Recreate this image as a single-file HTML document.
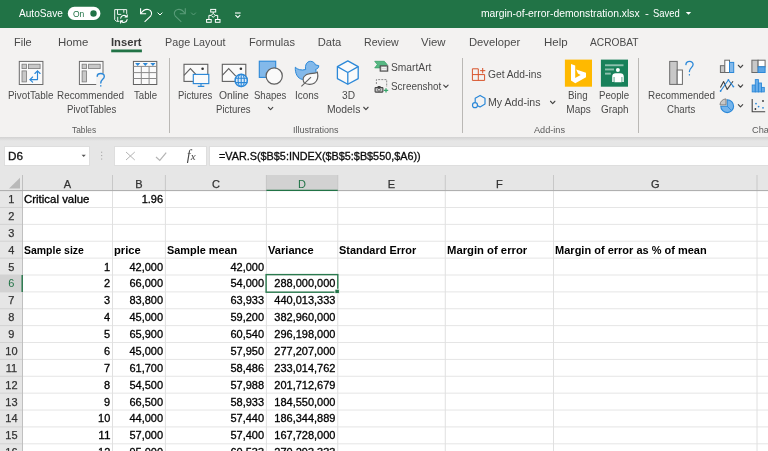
<!DOCTYPE html>
<html lang="en">
<head>
<meta charset="utf-8">
<title>margin-of-error-demonstration.xlsx - Excel</title>
<style>
html,body{margin:0;padding:0;}
body{width:768px;height:451px;overflow:hidden;background:#e6e6e6;font-family:"Liberation Sans",sans-serif;}
#app{will-change:transform;position:relative;width:768px;height:451px;overflow:hidden;background:#e6e6e6;}
.r{position:absolute;}
.t{position:absolute;white-space:nowrap;line-height:1;color:#444;transform-origin:0 50%;font-family:"Liberation Sans",sans-serif;}
.t.k{-webkit-text-stroke:.3px #000;}
.t.k2{-webkit-text-stroke:.25px #333;}
.t.fx{font-family:"Liberation Serif",serif;font-style:italic;}
.t.fx small{font-size:11px;}
svg{position:absolute;overflow:visible;}
svg.lines{left:0;top:0;}
.tabrow{position:absolute;left:0;top:28px;width:768px;height:27px;background:#f3f2f1;}
.ribbonbg{position:absolute;left:0;top:55px;width:768px;height:82px;background:#f3f2f1;}
.shadow{position:absolute;left:0;top:137px;width:768px;height:4px;background:linear-gradient(#d2d2d2,#e6e6e6);}
.sep{position:absolute;top:58px;width:1px;height:75px;background:#bab8b5;}
.box{position:absolute;background:#fff;top:147px;height:18px;box-shadow:0 0 0 1px #dedede;}
</style>
</head>
<body>
<div id="app">
<header class="title">
<svg class="lines" width="768" height="60" viewBox="0 0 768 60"><rect x="0" y="0" width="768" height="28.4" fill="#217346"/></svg>
<svg class="lines" width="768" height="60" viewBox="0 0 768 60"><rect x="67.8" y="6.8" width="32.6" height="13.2" rx="6.6" fill="#fff"/><circle cx="93.5" cy="13.5" r="3.2" fill="#217346"/></svg>
<svg class="lines ic-title" width="768" height="451" viewBox="0 0 768 451" fill="none">
<g stroke="#fff" stroke-width="1" stroke-linejoin="round" opacity=".92"><path d="M119.4 21.3H116.4L114.7 19.6V9.6H126.7V13.9"/><path d="M117.5 9.6V14.4H121.3"/><path d="M123.8 9.6V12.7"/><path d="M117.7 21.3V16.8"/></g>
<g stroke="#fff" stroke-width="1.1" stroke-linecap="round" stroke-linejoin="round"><path d="M120.7 18.2A3.3 3.3 0 0 1 126.6 16.7M127.2 14.9V17H125.1"/><path d="M127.1 19.6A3.3 3.3 0 0 1 121.2 21.1M120.6 22.9V20.8H122.7"/></g>
<g stroke="#fff" stroke-width="1.1" stroke-linecap="square" stroke-linejoin="miter"><path d="M140.6 8.8V13.7H145.6"/><path d="M141 13.4C142.8 10.6 145.6 9 148.2 9.5C151.6 10.3 152.6 13.8 150.6 16.2L144.6 21.8" stroke-linecap="butt"/><path d="M157.9 12.9L160 15L162.1 12.9" stroke-linecap="round" stroke-width="1"/></g>
<g stroke="#5a9c79" stroke-width="1.1" stroke-linecap="square"><path d="M185.3 8.8V13.7H180.3"/><path d="M184.9 13.4C183.1 10.6 180.3 9 177.7 9.5C174.3 10.3 173.3 13.8 175.3 16.2L181.3 21.8" stroke-linecap="butt"/><path d="M191.4 12.9L193.5 15L195.6 12.9" stroke-linecap="round" stroke-width="1"/></g>
<g stroke="#fff" stroke-width="1"><rect x="210.7" y="9.4" width="5" height="2.6"/><rect x="206.6" y="19.5" width="4.6" height="2.8"/><rect x="215.4" y="19.5" width="4.6" height="2.8"/><path d="M213.2 12V13.4M213.2 13.4L215.2 15.4L213.2 17.4L211.2 15.4ZM211.2 15.4H208.9V19.5M215.2 15.4H217.7V19.5"/></g>
<g stroke="#fff" stroke-width="1.1"><path d="M235 13H240.6"/><path d="M235.4 15.1L237.8 17.4L240.2 15.1"/></g>
<path d="M685.8 12H691.2L688.5 14.8Z" fill="#fff"/>
</svg>
<span class="t" style="top:9.00px;font-size:10.4px;color:#fff;left:19.33px;transform:scaleX(0.973);">AutoSave</span>
<span class="t" style="top:10.00px;font-size:8.6px;color:#217346;left:72.73px;transform:scaleX(0.989);">On</span>
<span class="t" style="top:9.00px;font-size:10.4px;color:#fff;left:481.33px;transform:scaleX(0.995);">margin-of-error-demonstration.xlsx</span>
<span class="t" style="top:9.00px;font-size:10.4px;color:#fff;left:644.63px;transform:scaleX(1.108);">-</span>
<span class="t" style="top:9.00px;font-size:10.4px;color:#fff;left:653.18px;transform:scaleX(0.906);">Saved</span>
</header>
<nav class="tabs">
<div class="tabrow"></div>
<svg class="lines" width="768" height="60" viewBox="0 0 768 60"><rect x="111.2" y="49.5" width="30.7" height="2.8" fill="#217346"/></svg>
<span class="t" style="top:37.00px;font-size:11.2px;color:#4a4a4a;left:13.98px;transform:scaleX(0.983);">File</span>
<span class="t" style="top:37.00px;font-size:11.2px;color:#4a4a4a;left:57.68px;transform:scaleX(1.020);">Home</span>
<span class="t" style="top:37.00px;font-size:11.2px;color:#4a4a4a;left:164.58px;transform:scaleX(0.962);">Page Layout</span>
<span class="t" style="top:37.00px;font-size:11.2px;color:#4a4a4a;left:248.88px;transform:scaleX(0.986);">Formulas</span>
<span class="t" style="top:37.00px;font-size:11.2px;color:#4a4a4a;left:317.63px;">Data</span>
<span class="t" style="top:37.00px;font-size:11.2px;color:#4a4a4a;left:363.88px;transform:scaleX(0.947);">Review</span>
<span class="t" style="top:37.00px;font-size:11.2px;color:#4a4a4a;left:421.38px;transform:scaleX(1.020);">View</span>
<span class="t" style="top:37.00px;font-size:11.2px;color:#4a4a4a;left:468.68px;transform:scaleX(1.005);">Developer</span>
<span class="t" style="top:37.00px;font-size:11.2px;color:#4a4a4a;left:543.68px;transform:scaleX(1.027);">Help</span>
<span class="t" style="top:37.00px;font-size:11.2px;color:#4a4a4a;left:590.38px;transform:scaleX(0.911);">ACROBAT</span>
<span class="t" style="top:37.00px;font-size:11px;color:#3a3a3a;font-weight:700;left:111.19px;transform:scaleX(1.018);">Insert</span>
</nav>
<section class="ribbon">
<div class="ribbonbg"></div>
<div class="sep" style="left:169px"></div>
<div class="sep" style="left:462px"></div>
<div class="sep" style="left:638px"></div>
<svg class="lines ic-ribbon" width="768" height="451" viewBox="0 0 768 451" fill="none">
<g stroke="#6a6a6a" stroke-width="1"><rect x="19.3" y="61.4" width="23.6" height="23.1" fill="#fafafa"/><g stroke="#7a7a7a" fill="#c8c8c8" stroke-width=".8"><rect x="22.0" y="64.2" width="4.4" height="4.4"/><rect x="28.5" y="64.2" width="11.6" height="4.4"/><rect x="22.0" y="70.9" width="4.4" height="11"/></g></g>
<g stroke="#2b88d8" stroke-width="1.15" stroke-linecap="round" stroke-linejoin="round"><path d="M30 79.6H37.5V71"/><path d="M32.6 77L30 79.6L32.6 82.2"/><path d="M34.9 73.5L37.5 70.8L40.1 73.5"/></g>
<g stroke="#6a6a6a" stroke-width="1"><rect x="79.4" y="61.4" width="23.6" height="23.1" fill="#fafafa"/><g stroke="#7a7a7a" fill="#c8c8c8" stroke-width=".8"><rect x="82.10000000000001" y="64.2" width="4.4" height="4.4"/><rect x="88.60000000000001" y="64.2" width="11.6" height="4.4"/><rect x="82.10000000000001" y="70.9" width="4.4" height="11"/></g></g>
<rect x="96.2" y="73.4" width="10" height="14" fill="#f3f2f1"/>
<g stroke="#2b88d8" stroke-width="1.4" stroke-linecap="round"><path d="M97.2 76.2C97.4 72.6 104.4 72.4 104.3 76.4C104.2 79.3 100.8 79.4 100.8 83"/><path d="M100.8 85.8V86"/></g>
<g stroke="#606060" stroke-width="1"><rect x="133.4" y="61.4" width="23.4" height="23.1" fill="#fafafa"/><path d="M133.4 66.4H156.8M133.4 72.6H156.8M133.4 78.5H156.8M141.3 66.4V84.5M149.1 66.4V84.5" stroke="#8a8a8a"/></g>
<path d="M135.1 63H140.3L137.7 66ZM142.7 63H147.9L145.3 66ZM150.3 63H155.5L152.9 66Z" fill="#2b88d8"/>
<g stroke="#606060" stroke-width="1.1"><rect x="184" y="64.3" width="23.8" height="17.1" fill="#fafafa"/><path d="M184 75.3L190.4 68.6L197.5 76.2" stroke-linejoin="miter"/></g><circle cx="202.6" cy="68.8" r="1.3" fill="#333"/>
<g stroke="#2b88d8" stroke-width="1.15"><rect x="193.3" y="74.4" width="15.5" height="9.2" fill="#fafafa"/><path d="M201 83.6V86.2M197.8 86.3H204.3"/></g>
<g stroke="#606060" stroke-width="1.1"><rect x="222.3" y="64.3" width="23.5" height="17.1" fill="#fafafa"/><path d="M222.3 75.3L228.70000000000002 68.6L235.8 76.2" stroke-linejoin="miter"/></g><circle cx="240.9" cy="68.8" r="1.3" fill="#333"/>
<circle cx="241.2" cy="80.4" r="6.1" fill="#dcebf9" stroke="#2b88d8" stroke-width="1.5"/><g stroke="#2b88d8" stroke-width="1.1"><path d="M235 78.2H247.4M235 82.6H247.4M241.2 74V86.8"/><ellipse cx="241.2" cy="80.4" rx="3.1" ry="6.2"/></g>
<rect x="259.3" y="61.2" width="16.4" height="16.2" fill="#83b9ea" stroke="#2b88d8" stroke-width="1.1"/><circle cx="274.2" cy="76" r="8.1" fill="#fafafa" stroke="#606060" stroke-width="1.2"/>
<path d="M295.3 67.2C297.2 69.6 301.6 70.7 305.7 69.5C304.7 65.4 306.8 61.3 310.4 61.3C313 61.3 314.8 62.8 315.3 64.8L318.8 65.7C318.7 67.8 317.4 69 315.6 69.4C316.6 71.6 316 74 314.6 75.6L308 79.4H302.4C297.6 78.6 295 73.6 295.3 67.2Z" fill="#83b9ea" stroke="#2b88d8" stroke-width="1"/>
<path d="M304.1 82.6C301.4 78 305 73.9 310 73.6C313 73.4 315.6 73.2 317.4 72.2C318.3 76 317.8 80.5 314.5 83C311.5 85 307 84.7 304.1 82.6Z" fill="#fafafa" stroke="#606060" stroke-width="1.1"/><path d="M301.4 86.4L311 77.2" stroke="#606060" stroke-width="1.1"/>
<g stroke="#2b88d8" stroke-width="1.3" stroke-linejoin="round"><path d="M347.8 60.9L358.2 66.6V78.6L347.8 84.3L337.4 78.6V66.6Z" fill="#fafafa"/><path d="M337.4 66.6L347.8 72.5L358.2 66.6M347.8 72.5V84.3"/></g>
<path d="M268.4 107.35L270.6 109.65L272.8 107.35" stroke="#444" stroke-width="1.1" stroke-linecap="round" stroke-linejoin="round"/>
<path d="M363.7 107.25L365.9 109.55L368.1 107.25" stroke="#444" stroke-width="1.1" stroke-linecap="round" stroke-linejoin="round"/>
<path d="M443.7 85.05L445.9 87.35L448.1 85.05" stroke="#444" stroke-width="1.1" stroke-linecap="round" stroke-linejoin="round"/>
<path d="M550.5 101.25L552.7 103.55L554.9 101.25" stroke="#444" stroke-width="1.1" stroke-linecap="round" stroke-linejoin="round"/>
<path d="M738.3 65.25L740.5 67.55L742.7 65.25" stroke="#444" stroke-width="1.1" stroke-linecap="round" stroke-linejoin="round"/>
<path d="M738.3 84.95L740.5 87.25L742.7 84.95" stroke="#444" stroke-width="1.1" stroke-linecap="round" stroke-linejoin="round"/>
<path d="M738.3 104.65L740.5 106.95L742.7 104.65" stroke="#444" stroke-width="1.1" stroke-linecap="round" stroke-linejoin="round"/>
<path d="M374.7 61.3H384.3L387.2 64.6L384.3 67.9H374.7L377.3 64.6Z" fill="#58b884" stroke="#2f9e62" stroke-width=".7"/><rect x="380.2" y="65.9" width="7.5" height="5.2" fill="#d4d4d4" stroke="#4a4a4a" stroke-width="1.1"/><path d="M382 67.6H386M382 69.4H386" stroke="#fff" stroke-width=".8"/>
<path d="M376.4 84V79.6H386.7V87" stroke="#8a8a8a" stroke-width="1" stroke-dasharray="2 1.1"/><rect x="375.1" y="87.6" width="7.8" height="4.5" rx=".6" fill="#c8c8c8" stroke="#444" stroke-width="1.1"/><path d="M377.3 87.4L377.9 86.5H380.3L380.9 87.4" stroke="#444" stroke-width="1"/><circle cx="379" cy="89.8" r="1.4" fill="#eee" stroke="#444" stroke-width=".8"/><path d="M383.8 90.4H388.2M386 88.2V92.6" stroke="#35a56b" stroke-width="1.3"/>
<g stroke="#d8532a" stroke-width="1"><path d="M478.3 68.8H472.4V80.4H484.6V74.6H472.4M478.3 68.8V80.4"/><path d="M482.7 68V73.3M480.1 70.65H485.3"/></g>
<g stroke="#2b88d8" stroke-width="1.2" stroke-linejoin="round"><path d="M478 105.9L480.1 107L485 104.1V98.3L480.1 95.4L475.2 98.3V102.2"/><circle cx="475" cy="105.2" r="2.5"/></g>
<rect x="564.9" y="59.6" width="27.1" height="27.1" fill="#ffb900"/><path d="M571 64L575.2 65.5V78L580.6 74.9L577.9 73.6L576.2 69.4L586 72.8V77.3L575.3 83.2L571 80.6Z" fill="#fff"/>
<rect x="600.9" y="59.6" width="27.1" height="27.1" fill="#18815a"/><g fill="#fff"><rect x="605" y="64.3" width="18.5" height="1.9" opacity=".5"/><rect x="605" y="68.5" width="9" height="1.9" opacity=".5"/><rect x="605" y="72.7" width="5.8" height="1.9" opacity=".5"/><circle cx="617.9" cy="70" r="2"/><path d="M612.2 82V76.4C612.2 74.2 613.6 73.2 615.6 73.2H620.4C622.4 73.2 623.8 74.2 623.8 76.4V82H622.3V77H621.6V82.2H614.4V77H613.7V82Z"/></g>
<rect x="669.7" y="61.4" width="7.5" height="23" fill="#c8c8c8" stroke="#6a6a6a" stroke-width="1"/><rect x="677.2" y="70" width="5.2" height="14.4" fill="#fff" stroke="#6a6a6a" stroke-width="1"/>
<g stroke="#2b88d8" stroke-width="1.3" stroke-linecap="round"><path d="M685.9 64.6C686.2 60.4 693.2 60.4 693.1 64.6C693 67.6 689.4 67.8 689.4 71.6"/><path d="M689.4 74.6V74.9"/></g>
<g stroke-width="1"><rect x="720.4" y="65.7" width="4.4" height="6.8" fill="#c8c8c8" stroke="#6a6a6a"/><rect x="724.8" y="60.2" width="4.7" height="12.3" fill="#fff" stroke="#6a6a6a"/><rect x="729.5" y="62.4" width="4.2" height="10.1" fill="#83b9ea" stroke="#2b88d8"/></g>
<g stroke-width="1"><rect x="751.9" y="60.2" width="6.2" height="12.3" fill="#c8c8c8" stroke="#6a6a6a"/><rect x="758.1" y="60.2" width="7" height="6.6" fill="#fff" stroke="#6a6a6a"/><rect x="758.1" y="66.8" width="7" height="5.7" fill="#5aa5e6" stroke="#2b88d8"/></g>
<g stroke-width="1.1" stroke-linejoin="round"><path d="M720.4 87.6L723.6 81.6L727.2 89.4L733 81.2" stroke="#444"/><path d="M720.6 91L728.4 80L733.4 86.6" stroke="#2b88d8"/></g><g fill="#2b88d8"><circle cx="720.6" cy="91" r=".9"/><circle cx="728.4" cy="80" r=".9"/><circle cx="733.4" cy="86.6" r=".9"/></g>
<g fill="#69aeea" stroke="#2b88d8" stroke-width=".9"><rect x="752.2" y="85" width="3.1" height="6.9"/><rect x="755.3" y="79.6" width="3.1" height="12.3"/><rect x="758.4" y="83" width="3.1" height="8.9"/><rect x="761.5" y="87.4" width="2.8" height="4.5"/></g>
<path d="M727.2 99.8A6.4 6.4 0 1 1 720.8 106.2H727.2Z" fill="#74b4ec" stroke="#2b88d8" stroke-width="1.1"/><path d="M726 98.9A6.1 6.1 0 0 0 720 104.9H726Z" fill="#c8c8c8" stroke="#7a7a7a" stroke-width=".9"/><path d="M727.2 106.2L731.6 110.7" stroke="#2b88d8" stroke-width=".9"/>
<path d="M752.2 99V111.8H765.2" stroke="#444" stroke-width="1.1"/><g fill="#2b88d8"><circle cx="756" cy="103.6" r=".9"/><circle cx="758.6" cy="106.6" r=".9"/><circle cx="763" cy="107.8" r=".9"/></g><g fill="#333"><circle cx="763" cy="101" r=".9"/><circle cx="755.4" cy="109" r=".9"/></g>
</svg>
<span class="t" style="top:91.00px;font-size:10px;color:#4a4a4a;left:8.20px;transform:scaleX(0.985);">PivotTable</span>
<span class="t" style="top:91.00px;font-size:10px;color:#4a4a4a;left:57.25px;transform:scaleX(0.989);">Recommended</span>
<span class="t" style="top:105.00px;font-size:10px;color:#4a4a4a;left:66.55px;transform:scaleX(0.964);">PivotTables</span>
<span class="t" style="top:91.00px;font-size:10px;color:#4a4a4a;left:133.95px;transform:scaleX(0.962);">Table</span>
<span class="t" style="top:91.00px;font-size:10px;color:#4a4a4a;left:178.20px;transform:scaleX(0.951);">Pictures</span>
<span class="t" style="top:91.00px;font-size:10px;color:#4a4a4a;left:218.95px;transform:scaleX(1.033);">Online</span>
<span class="t" style="top:105.00px;font-size:10px;color:#4a4a4a;left:216.45px;transform:scaleX(0.958);">Pictures</span>
<span class="t" style="top:91.00px;font-size:10px;color:#4a4a4a;left:254.45px;transform:scaleX(0.954);">Shapes</span>
<span class="t" style="top:91.00px;font-size:10px;color:#4a4a4a;left:295.35px;transform:scaleX(0.991);">Icons</span>
<span class="t" style="top:91.00px;font-size:10px;color:#4a4a4a;left:341.95px;transform:scaleX(1.016);">3D</span>
<span class="t" style="top:105.00px;font-size:10px;color:#4a4a4a;left:326.95px;transform:scaleX(1.034);">Models</span>
<span class="t" style="top:63.00px;font-size:10px;color:#4a4a4a;left:390.85px;transform:scaleX(1.024);">SmartArt</span>
<span class="t" style="top:82.00px;font-size:10px;color:#4a4a4a;left:390.85px;transform:scaleX(0.992);">Screenshot</span>
<span class="t" style="top:70.00px;font-size:10px;color:#4a4a4a;left:488.25px;transform:scaleX(1.024);">Get Add-ins</span>
<span class="t" style="top:98.00px;font-size:10px;color:#4a4a4a;left:488.25px;transform:scaleX(1.061);">My Add-ins</span>
<span class="t" style="top:91.00px;font-size:10px;color:#4a4a4a;left:568.20px;transform:scaleX(0.979);">Bing</span>
<span class="t" style="top:105.00px;font-size:10px;color:#4a4a4a;left:566.35px;">Maps</span>
<span class="t" style="top:91.00px;font-size:10px;color:#4a4a4a;left:599.45px;transform:scaleX(0.967);">People</span>
<span class="t" style="top:105.00px;font-size:10px;color:#4a4a4a;left:600.70px;transform:scaleX(0.993);">Graph</span>
<span class="t" style="top:91.00px;font-size:10px;color:#4a4a4a;left:647.55px;transform:scaleX(0.988);">Recommended</span>
<span class="t" style="top:105.00px;font-size:10px;color:#4a4a4a;left:667.20px;transform:scaleX(0.963);">Charts</span>
<span class="t" style="top:125.00px;font-size:9.4px;color:#5a5a5a;left:72.38px;transform:scaleX(0.890);">Tables</span>
<span class="t" style="top:125.00px;font-size:9.4px;color:#5a5a5a;left:292.98px;transform:scaleX(0.962);">Illustrations</span>
<span class="t" style="top:125.00px;font-size:9.4px;color:#5a5a5a;left:534.48px;transform:scaleX(0.976);">Add-ins</span>
<span class="t" style="top:125.00px;font-size:9.4px;color:#5a5a5a;left:751.73px;transform:scaleX(0.980);">Charts</span>
</section>
<section class="fbar">
<div class="shadow"></div>
<div class="box" style="left:5px;width:84px"></div>
<div class="box" style="left:115px;width:91px"></div>
<div class="box" style="left:210px;width:560px"></div>
<svg class="lines ic-fbar" width="768" height="451" viewBox="0 0 768 451" fill="none">
<path d="M81.6 154.7H85.8L83.7 157.1Z" fill="#555"/>
<g fill="#a6a6a6"><rect x="101.1" y="151.7" width="1.1" height="1.1"/><rect x="101.1" y="155" width="1.1" height="1.1"/><rect x="101.1" y="158.5" width="1.1" height="1.1"/></g>
<path d="M126 152L134.8 160M134.8 152L126 160" stroke="#b4b4b4" stroke-width="1"/>
<path d="M156 157L159.8 160.4L166.2 152.6" stroke="#b4b4b4" stroke-width="1.2"/>
</svg>
<span class="t k" style="top:151.00px;font-size:11px;color:#222;left:7.70px;transform:scaleX(1.067);">D6</span>
<span class="t k" style="top:151.00px;font-size:11px;color:#111;left:218.65px;transform:scaleX(0.984);">=VAR.S($B$5:INDEX($B$5:$B$550,$A6))</span>
<span class="t fx" style="top:149.00px;font-size:14px;left:186.80px;">f<small>x</small></span>
</section>
<main class="grid">
<div class="r" style="left:0.00px;top:174.60px;width:768.00px;height:300.00px;background:#fff;"></div>
<div class="r" style="left:0.00px;top:174.60px;width:768.00px;height:16.00px;background:#e6e6e6;"></div>
<div class="r" style="left:0.00px;top:190.60px;width:22.50px;height:300.00px;background:#e6e6e6;"></div>
<div class="r" style="left:266.40px;top:174.60px;width:71.40px;height:16.00px;background:#d2d2d2;"></div>
<div class="r" style="left:0.00px;top:275.00px;width:22.50px;height:16.88px;background:#d2d2d2;"></div>
<svg class="lines" width="768" height="451" viewBox="0 0 768 451">
<path d="M22.5 207.48H768" stroke="#e5e5e5" stroke-width="1"/>
<path d="M0 207.48H22.5" stroke="#d2d2d2" stroke-width="1"/>
<path d="M22.5 224.36H768" stroke="#e5e5e5" stroke-width="1"/>
<path d="M0 224.36H22.5" stroke="#d2d2d2" stroke-width="1"/>
<path d="M22.5 241.24H768" stroke="#e5e5e5" stroke-width="1"/>
<path d="M0 241.24H22.5" stroke="#d2d2d2" stroke-width="1"/>
<path d="M22.5 258.12H768" stroke="#e5e5e5" stroke-width="1"/>
<path d="M0 258.12H22.5" stroke="#d2d2d2" stroke-width="1"/>
<path d="M22.5 275.00H768" stroke="#e5e5e5" stroke-width="1"/>
<path d="M0 275.00H22.5" stroke="#d2d2d2" stroke-width="1"/>
<path d="M22.5 291.88H768" stroke="#e5e5e5" stroke-width="1"/>
<path d="M0 291.88H22.5" stroke="#d2d2d2" stroke-width="1"/>
<path d="M22.5 308.76H768" stroke="#e5e5e5" stroke-width="1"/>
<path d="M0 308.76H22.5" stroke="#d2d2d2" stroke-width="1"/>
<path d="M22.5 325.64H768" stroke="#e5e5e5" stroke-width="1"/>
<path d="M0 325.64H22.5" stroke="#d2d2d2" stroke-width="1"/>
<path d="M22.5 342.52H768" stroke="#e5e5e5" stroke-width="1"/>
<path d="M0 342.52H22.5" stroke="#d2d2d2" stroke-width="1"/>
<path d="M22.5 359.40H768" stroke="#e5e5e5" stroke-width="1"/>
<path d="M0 359.40H22.5" stroke="#d2d2d2" stroke-width="1"/>
<path d="M22.5 376.28H768" stroke="#e5e5e5" stroke-width="1"/>
<path d="M0 376.28H22.5" stroke="#d2d2d2" stroke-width="1"/>
<path d="M22.5 393.16H768" stroke="#e5e5e5" stroke-width="1"/>
<path d="M0 393.16H22.5" stroke="#d2d2d2" stroke-width="1"/>
<path d="M22.5 410.04H768" stroke="#e5e5e5" stroke-width="1"/>
<path d="M0 410.04H22.5" stroke="#d2d2d2" stroke-width="1"/>
<path d="M22.5 426.92H768" stroke="#e5e5e5" stroke-width="1"/>
<path d="M0 426.92H22.5" stroke="#d2d2d2" stroke-width="1"/>
<path d="M22.5 443.80H768" stroke="#e5e5e5" stroke-width="1"/>
<path d="M0 443.80H22.5" stroke="#d2d2d2" stroke-width="1"/>
<path d="M22.5 460.68H768" stroke="#e5e5e5" stroke-width="1"/>
<path d="M0 460.68H22.5" stroke="#d2d2d2" stroke-width="1"/>
<path d="M112.50 190.6V451" stroke="#e0e0e0" stroke-width="1"/>
<path d="M112.50 175V190.6" stroke="#c8c8c8" stroke-width="1"/>
<path d="M165.40 190.6V451" stroke="#e0e0e0" stroke-width="1"/>
<path d="M165.40 175V190.6" stroke="#c8c8c8" stroke-width="1"/>
<path d="M266.40 190.6V451" stroke="#e0e0e0" stroke-width="1"/>
<path d="M266.40 175V190.6" stroke="#c8c8c8" stroke-width="1"/>
<path d="M337.75 190.6V451" stroke="#e0e0e0" stroke-width="1"/>
<path d="M337.75 175V190.6" stroke="#c8c8c8" stroke-width="1"/>
<path d="M445.25 190.6V451" stroke="#e0e0e0" stroke-width="1"/>
<path d="M445.25 175V190.6" stroke="#c8c8c8" stroke-width="1"/>
<path d="M553.50 190.6V451" stroke="#e0e0e0" stroke-width="1"/>
<path d="M553.50 175V190.6" stroke="#c8c8c8" stroke-width="1"/>
<path d="M757.00 190.6V451" stroke="#e0e0e0" stroke-width="1"/>
<path d="M757.00 175V190.6" stroke="#c8c8c8" stroke-width="1"/>
<path d="M22.5 175V451" stroke="#c0c0c0" stroke-width="1"/>
<path d="M0 190.6H768" stroke="#aaa" stroke-width="1"/>
<path d="M20 177.8V188.4H9Z" fill="#b9b9b9"/>
<path d="M266.4 190.4H337.75" stroke="#217346" stroke-width="1.4"/>
<path d="M22.2 275.00V291.88" stroke="#217346" stroke-width="1.4"/>
<rect x="266.1" y="274.6" width="71.7" height="17.6" fill="none" stroke="#2a7a4e" stroke-width="1.4"/>
<rect x="334.9" y="289.2" width="4.4" height="4.4" fill="#217346" stroke="#fff" stroke-width="0.8"/>
</svg>
<span class="t k2" style="top:179.00px;font-size:11px;color:#333;left:67.50px;transform-origin:0 50%;transform:scaleX(1.000) translateX(-50%);">A</span>
<span class="t k2" style="top:179.00px;font-size:11px;color:#333;left:138.95px;transform-origin:0 50%;transform:scaleX(1.000) translateX(-50%);">B</span>
<span class="t k2" style="top:179.00px;font-size:11px;color:#333;left:215.90px;transform-origin:0 50%;transform:scaleX(1.000) translateX(-50%);">C</span>
<span class="t" style="top:179.00px;font-size:11px;color:#217346;left:302.07px;transform-origin:0 50%;transform:scaleX(1.000) translateX(-50%);">D</span>
<span class="t k2" style="top:179.00px;font-size:11px;color:#333;left:391.50px;transform-origin:0 50%;transform:scaleX(1.000) translateX(-50%);">E</span>
<span class="t k2" style="top:179.00px;font-size:11px;color:#333;left:499.38px;transform-origin:0 50%;transform:scaleX(1.000) translateX(-50%);">F</span>
<span class="t k2" style="top:179.00px;font-size:11px;color:#333;left:655.25px;transform-origin:0 50%;transform:scaleX(1.000) translateX(-50%);">G</span>
<span class="t k2" style="top:194.00px;font-size:11px;color:#333;left:11.40px;transform-origin:0 50%;transform:scaleX(1.000) translateX(-50%);">1</span>
<span class="t k2" style="top:211.00px;font-size:11px;color:#333;left:11.40px;transform-origin:0 50%;transform:scaleX(1.000) translateX(-50%);">2</span>
<span class="t k2" style="top:228.00px;font-size:11px;color:#333;left:11.40px;transform-origin:0 50%;transform:scaleX(1.000) translateX(-50%);">3</span>
<span class="t k2" style="top:245.00px;font-size:11px;color:#333;left:11.40px;transform-origin:0 50%;transform:scaleX(1.000) translateX(-50%);">4</span>
<span class="t k2" style="top:262.00px;font-size:11px;color:#333;left:11.40px;transform-origin:0 50%;transform:scaleX(1.000) translateX(-50%);">5</span>
<span class="t" style="top:278.00px;font-size:11px;color:#217346;left:11.40px;transform-origin:0 50%;transform:scaleX(1.000) translateX(-50%);">6</span>
<span class="t k2" style="top:295.00px;font-size:11px;color:#333;left:11.40px;transform-origin:0 50%;transform:scaleX(1.000) translateX(-50%);">7</span>
<span class="t k2" style="top:312.00px;font-size:11px;color:#333;left:11.40px;transform-origin:0 50%;transform:scaleX(1.000) translateX(-50%);">8</span>
<span class="t k2" style="top:329.00px;font-size:11px;color:#333;left:11.40px;transform-origin:0 50%;transform:scaleX(1.000) translateX(-50%);">9</span>
<span class="t k2" style="top:346.00px;font-size:11px;color:#333;left:11.40px;transform-origin:0 50%;transform:scaleX(1.000) translateX(-50%);">10</span>
<span class="t k2" style="top:363.00px;font-size:11px;color:#333;left:11.40px;transform-origin:0 50%;transform:scaleX(1.000) translateX(-50%);">11</span>
<span class="t k2" style="top:380.00px;font-size:11px;color:#333;left:11.40px;transform-origin:0 50%;transform:scaleX(1.000) translateX(-50%);">12</span>
<span class="t k2" style="top:397.00px;font-size:11px;color:#333;left:11.40px;transform-origin:0 50%;transform:scaleX(1.000) translateX(-50%);">13</span>
<span class="t k2" style="top:413.00px;font-size:11px;color:#333;left:11.40px;transform-origin:0 50%;transform:scaleX(1.000) translateX(-50%);">14</span>
<span class="t k2" style="top:430.00px;font-size:11px;color:#333;left:11.40px;transform-origin:0 50%;transform:scaleX(1.000) translateX(-50%);">15</span>
<span class="t k2" style="top:447.00px;font-size:11px;color:#333;left:11.40px;transform-origin:0 50%;transform:scaleX(1.000) translateX(-50%);">16</span>
<span class="t k" style="top:194.00px;font-size:11px;color:#000;left:24.09px;transform:scaleX(1.040);">Critical value</span>
<span class="t k" style="top:194.00px;font-size:11px;color:#000;right:604.90px;transform-origin:100% 50%;">1.96</span>
<span class="t" style="top:245.00px;font-size:11px;color:#000;font-weight:700;left:24.09px;transform:scaleX(0.951);">Sample size</span>
<span class="t" style="top:245.00px;font-size:11px;color:#000;font-weight:700;left:114.09px;transform:scaleX(1.016);">price</span>
<span class="t" style="top:245.00px;font-size:11px;color:#000;font-weight:700;left:167.00px;transform:scaleX(0.990);">Sample mean</span>
<span class="t" style="top:245.00px;font-size:11px;color:#000;font-weight:700;left:267.99px;transform:scaleX(1.010);">Variance</span>
<span class="t" style="top:245.00px;font-size:11px;color:#000;font-weight:700;left:339.34px;transform:scaleX(0.994);">Standard Error</span>
<span class="t" style="top:245.00px;font-size:11px;color:#000;font-weight:700;left:446.84px;transform:scaleX(1.025);">Margin of error</span>
<span class="t" style="top:245.00px;font-size:11px;color:#000;font-weight:700;left:555.10px;">Margin of error as % of mean</span>
<span class="t k" style="top:262.00px;font-size:11px;color:#000;right:657.80px;transform-origin:100% 50%;transform:scaleX(0.996);">1</span>
<span class="t k" style="top:262.00px;font-size:11px;color:#000;right:604.90px;transform-origin:100% 50%;">42,000</span>
<span class="t k" style="top:262.00px;font-size:11px;color:#000;right:503.90px;transform-origin:100% 50%;">42,000</span>
<span class="t k" style="top:278.00px;font-size:11px;color:#000;right:657.80px;transform-origin:100% 50%;transform:scaleX(0.996);">2</span>
<span class="t k" style="top:278.00px;font-size:11px;color:#000;right:604.90px;transform-origin:100% 50%;">66,000</span>
<span class="t k" style="top:278.00px;font-size:11px;color:#000;right:503.90px;transform-origin:100% 50%;">54,000</span>
<span class="t k" style="top:278.00px;font-size:11px;color:#000;right:432.55px;transform-origin:100% 50%;">288,000,000</span>
<span class="t k" style="top:295.00px;font-size:11px;color:#000;right:657.80px;transform-origin:100% 50%;transform:scaleX(0.996);">3</span>
<span class="t k" style="top:295.00px;font-size:11px;color:#000;right:604.90px;transform-origin:100% 50%;">83,800</span>
<span class="t k" style="top:295.00px;font-size:11px;color:#000;right:503.90px;transform-origin:100% 50%;">63,933</span>
<span class="t k" style="top:295.00px;font-size:11px;color:#000;right:432.55px;transform-origin:100% 50%;">440,013,333</span>
<span class="t k" style="top:312.00px;font-size:11px;color:#000;right:657.80px;transform-origin:100% 50%;transform:scaleX(0.996);">4</span>
<span class="t k" style="top:312.00px;font-size:11px;color:#000;right:604.90px;transform-origin:100% 50%;">45,000</span>
<span class="t k" style="top:312.00px;font-size:11px;color:#000;right:503.90px;transform-origin:100% 50%;">59,200</span>
<span class="t k" style="top:312.00px;font-size:11px;color:#000;right:432.55px;transform-origin:100% 50%;">382,960,000</span>
<span class="t k" style="top:329.00px;font-size:11px;color:#000;right:657.80px;transform-origin:100% 50%;transform:scaleX(0.996);">5</span>
<span class="t k" style="top:329.00px;font-size:11px;color:#000;right:604.90px;transform-origin:100% 50%;">65,900</span>
<span class="t k" style="top:329.00px;font-size:11px;color:#000;right:503.90px;transform-origin:100% 50%;">60,540</span>
<span class="t k" style="top:329.00px;font-size:11px;color:#000;right:432.55px;transform-origin:100% 50%;">296,198,000</span>
<span class="t k" style="top:346.00px;font-size:11px;color:#000;right:657.80px;transform-origin:100% 50%;transform:scaleX(0.996);">6</span>
<span class="t k" style="top:346.00px;font-size:11px;color:#000;right:604.90px;transform-origin:100% 50%;">45,000</span>
<span class="t k" style="top:346.00px;font-size:11px;color:#000;right:503.90px;transform-origin:100% 50%;">57,950</span>
<span class="t k" style="top:346.00px;font-size:11px;color:#000;right:432.55px;transform-origin:100% 50%;">277,207,000</span>
<span class="t k" style="top:363.00px;font-size:11px;color:#000;right:657.80px;transform-origin:100% 50%;transform:scaleX(0.996);">7</span>
<span class="t k" style="top:363.00px;font-size:11px;color:#000;right:604.90px;transform-origin:100% 50%;">61,700</span>
<span class="t k" style="top:363.00px;font-size:11px;color:#000;right:503.90px;transform-origin:100% 50%;">58,486</span>
<span class="t k" style="top:363.00px;font-size:11px;color:#000;right:432.55px;transform-origin:100% 50%;">233,014,762</span>
<span class="t k" style="top:380.00px;font-size:11px;color:#000;right:657.80px;transform-origin:100% 50%;transform:scaleX(0.996);">8</span>
<span class="t k" style="top:380.00px;font-size:11px;color:#000;right:604.90px;transform-origin:100% 50%;">54,500</span>
<span class="t k" style="top:380.00px;font-size:11px;color:#000;right:503.90px;transform-origin:100% 50%;">57,988</span>
<span class="t k" style="top:380.00px;font-size:11px;color:#000;right:432.55px;transform-origin:100% 50%;">201,712,679</span>
<span class="t k" style="top:397.00px;font-size:11px;color:#000;right:657.80px;transform-origin:100% 50%;transform:scaleX(0.996);">9</span>
<span class="t k" style="top:397.00px;font-size:11px;color:#000;right:604.90px;transform-origin:100% 50%;">66,500</span>
<span class="t k" style="top:397.00px;font-size:11px;color:#000;right:503.90px;transform-origin:100% 50%;">58,933</span>
<span class="t k" style="top:397.00px;font-size:11px;color:#000;right:432.55px;transform-origin:100% 50%;">184,550,000</span>
<span class="t k" style="top:413.00px;font-size:11px;color:#000;right:657.80px;transform-origin:100% 50%;transform:scaleX(0.996);">10</span>
<span class="t k" style="top:413.00px;font-size:11px;color:#000;right:604.90px;transform-origin:100% 50%;">44,000</span>
<span class="t k" style="top:413.00px;font-size:11px;color:#000;right:503.90px;transform-origin:100% 50%;">57,440</span>
<span class="t k" style="top:413.00px;font-size:11px;color:#000;right:432.55px;transform-origin:100% 50%;">186,344,889</span>
<span class="t k" style="top:430.00px;font-size:11px;color:#000;right:657.80px;transform-origin:100% 50%;transform:scaleX(1.068);">11</span>
<span class="t k" style="top:430.00px;font-size:11px;color:#000;right:604.90px;transform-origin:100% 50%;">57,000</span>
<span class="t k" style="top:430.00px;font-size:11px;color:#000;right:503.90px;transform-origin:100% 50%;">57,400</span>
<span class="t k" style="top:430.00px;font-size:11px;color:#000;right:432.55px;transform-origin:100% 50%;">167,728,000</span>
<span class="t k" style="top:447.00px;font-size:11px;color:#000;right:657.80px;transform-origin:100% 50%;transform:scaleX(0.996);">12</span>
<span class="t k" style="top:447.00px;font-size:11px;color:#000;right:604.90px;transform-origin:100% 50%;">95,000</span>
<span class="t k" style="top:447.00px;font-size:11px;color:#000;right:503.90px;transform-origin:100% 50%;">60,533</span>
<span class="t k" style="top:447.00px;font-size:11px;color:#000;right:432.55px;transform-origin:100% 50%;">270,293,333</span>
</main>
</div>
</body>
</html>
